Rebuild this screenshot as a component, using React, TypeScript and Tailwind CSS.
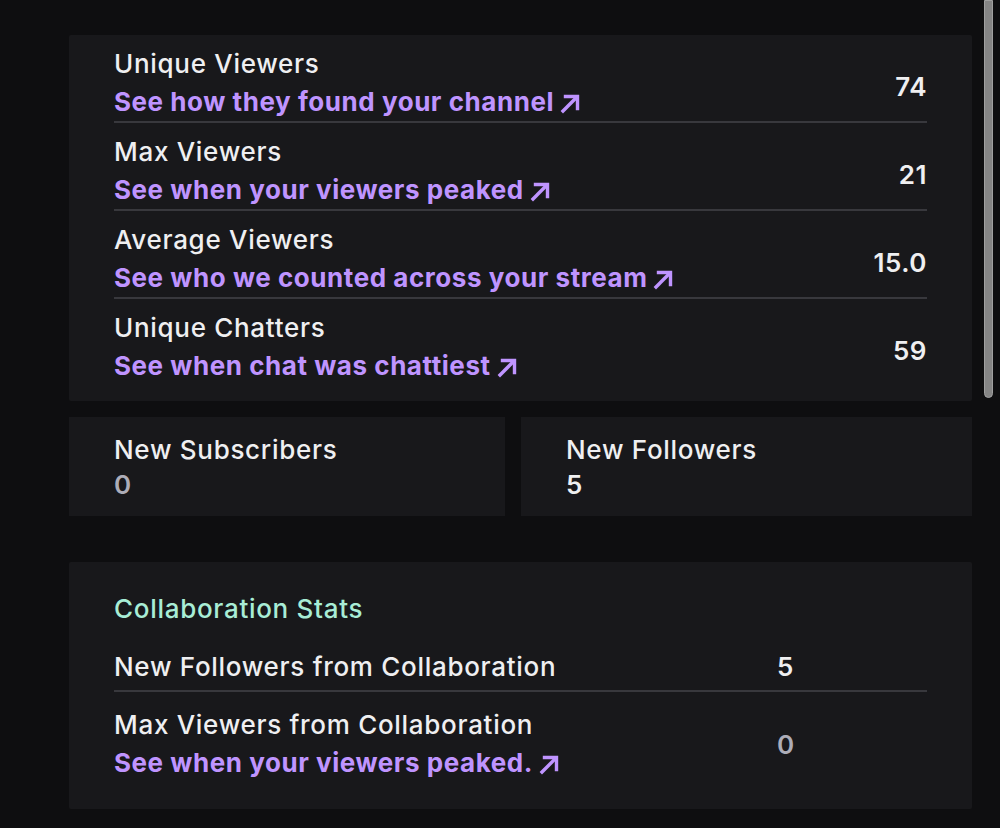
import type { ReactNode } from "react";

const FONT = "font-['Inter','Noto_Sans',sans-serif]";

function ArrowUpRight() {
  return (
    <svg
      width="24"
      height="24"
      viewBox="0 0 24 24"
      fill="none"
      stroke="currentColor"
      strokeWidth="3.4"
      strokeLinecap="square"
      className="mt-[3px] flex-shrink-0"
    >
      <path d="M5 19 18 6" />
      <path d="M7.5 4.5h12v12" />
    </svg>
  );
}

function StatLink({ children }: { children: ReactNode }) {
  return (
    <a className="flex items-center gap-[4px] text-[26px] font-bold leading-[38px] tracking-[0.55px] text-[#bf94ff]">
      <span>{children}</span>
      <ArrowUpRight />
    </a>
  );
}

interface StatRowProps {
  title: string;
  link: string;
  value: string;
  last?: boolean;
}

function StatRow({ title, link, value, last }: StatRowProps) {
  return (
    <div
      className={`flex items-center justify-between pt-[10px] ${
        last ? "" : "border-b-2 border-[#38383d]"
      }`}
    >
      <div>
        <div className="text-[26px] font-medium leading-[38px] tracking-[0.7px] text-[#efeff1]">
          {title}
        </div>
        <StatLink>{link}</StatLink>
      </div>
      <div className="pt-[6px] text-[26px] font-semibold tracking-[0.5px] text-[#efeff1]">
        {value}
      </div>
    </div>
  );
}

const ROWS = [
  { title: "Unique Viewers", link: "See how they found your channel", value: "74" },
  { title: "Max Viewers", link: "See when your viewers peaked", value: "21" },
  { title: "Average Viewers", link: "See who we counted across your stream", value: "15.0" },
  { title: "Unique Chatters", link: "See when chat was chattiest", value: "59" },
];

function SmallCard({ title, value, muted }: { title: string; value: string; muted?: boolean }) {
  return (
    <div className="bg-[#18181b] px-[45px] pb-[14px] pt-[15px]">
      <div className="text-[26px] font-medium leading-[36px] tracking-[0.7px] text-[#efeff1]">
        {title}
      </div>
      <div
        className={`text-[26px] font-semibold leading-[34px] ${
          muted ? "text-[#adadb8]" : "text-[#efeff1]"
        }`}
      >
        {value}
      </div>
    </div>
  );
}

export default function App() {
  return (
    <div className={`relative min-h-screen overflow-hidden bg-[#0e0e10] ${FONT}`}>
      <div className="pl-[69px] pr-[28px] pt-[35px] pb-[20px]">
        <div className="rounded-[2px] bg-[#18181b] px-[45px] pb-[16px]">
          {ROWS.map((r, i) => (
            <StatRow key={r.title} {...r} last={i === ROWS.length - 1} />
          ))}
        </div>

        <div className="mt-4 grid grid-cols-[436px_1fr] gap-4">
          <SmallCard title="New Subscribers" value="0" muted />
          <SmallCard title="New Followers" value="5" />
        </div>

        <div className="mt-[46px] rounded-[2px] bg-[#18181b] px-[45px] pb-[27px] pt-[28px]">
          <div className="text-[26px] font-medium leading-[38px] tracking-[0.7px] text-[#a8edd6]">
            Collaboration Stats
          </div>
          <div className="grid grid-cols-[663px_1fr] items-center border-b-2 border-[#38383d] pb-[4px] pt-[19px]">
            <div className="text-[26px] font-medium leading-[38px] tracking-[0.7px] text-[#efeff1]">
              New Followers from Collaboration
            </div>
            <div className="text-[26px] font-semibold text-[#efeff1]">5</div>
          </div>
          <div className="grid grid-cols-[663px_1fr] items-center pt-[14px]">
            <div>
              <div className="text-[26px] font-medium leading-[38px] tracking-[0.7px] text-[#efeff1]">
                Max Viewers from Collaboration
              </div>
              <StatLink>See when your viewers peaked.</StatLink>
            </div>
            <div className="text-[26px] font-semibold text-[#adadb8]">0</div>
          </div>
        </div>
      </div>

      {/* scrollbar thumb */}
      <div className="absolute left-[984px] top-0 h-[398px] w-[9px] rounded-b-full border border-[#a0a0a0] bg-[#858585]" />
    </div>
  );
}
